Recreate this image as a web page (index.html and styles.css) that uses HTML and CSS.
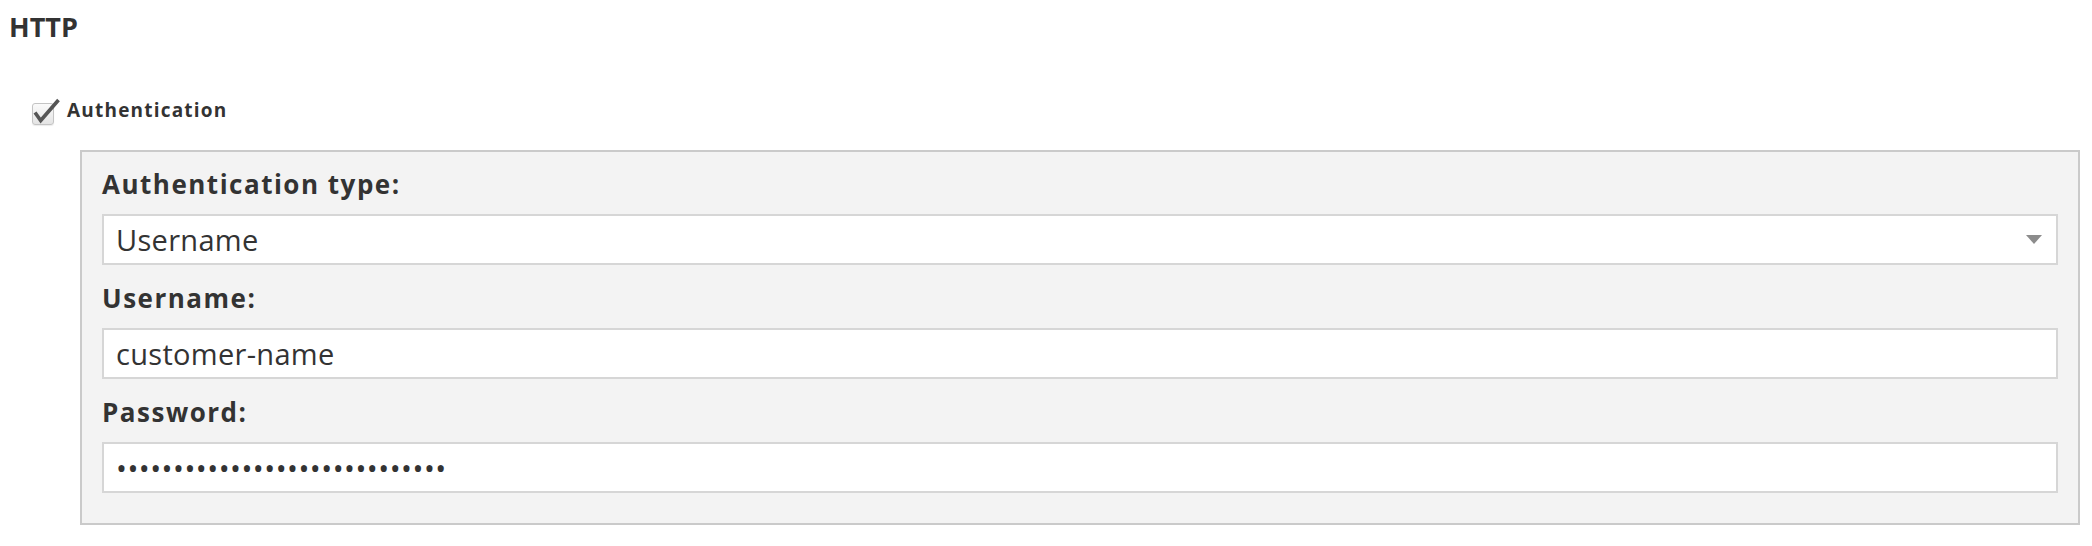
FILE: index.html
```html
<!DOCTYPE html>
<html>
	<head>
		<meta charset="utf-8" />
		<title>HTTP</title>
		<link rel="stylesheet" href="styles.css">
	</head>
	<body>
		<div class="settings">
			<h3 class="section-title">HTTP</h3>
			<label class="check-row">
				<span class="checkbox checked">
					<svg class="tick" width="30" height="28" viewBox="0 0 30 28">
						<path d="M3 14.5 L8.7 22.5 L26.5 2" fill="none" stroke="#555" stroke-width="3.6" stroke-linejoin="miter"/>
					</svg>
				</span>
				<span class="check-text">Authentication</span>
			</label>
			<div class="auth-panel">
				<div class="field-label">Authentication type:</div>
				<div class="field select">
					<span>Username</span>
					<svg class="arrow" width="16" height="9" viewBox="0 0 16 9">
						<path d="M0 0 H16 L8 9 Z" fill="#8c8c8c"/>
					</svg>
				</div>
				<div class="field-label">Username:</div>
				<div class="field">customer-name</div>
				<div class="field-label">Password:</div>
				<div class="field password">&bull;&bull;&bull;&bull;&bull;&bull;&bull;&bull;&bull;&bull;&bull;&bull;&bull;&bull;&bull;&bull;&bull;&bull;&bull;&bull;&bull;&bull;&bull;&bull;&bull;&bull;&bull;&bull;&bull;</div>
			</div>
		</div>
	</body>
</html>
```
FILE: styles.css
```css
*{
	margin: 0;
	padding: 0;
	box-sizing: border-box;
}
body{
	background-color: white;
	color: rgb(51, 51, 51);
	font-family: "Open Sans", "Noto Sans", sans-serif;
}
/*标题*/
.section-title{
	margin: 11px 0 0 9px;
	font-size: 27px;
	line-height: 32px;
	font-weight: 700;
}
/*复选框*/
.check-row{
	display: flex;
	align-items: flex-start;
	margin-top: 56px;
	padding-left: 32px;
	cursor: pointer;
}
.checkbox{
	position: relative;
	display: block;
	width: 22px;
	height: 22px;
	margin-top: 4px;
	border: 1px solid rgb(196, 196, 196);
	border-radius: 3px;
	background: linear-gradient(rgb(250, 250, 250), rgb(228, 228, 228));
	box-shadow: 0 1px 1px rgba(0, 0, 0, .08);
}
.checkbox .tick{
	position: absolute;
	left: -1px;
	top: -6px;
}
.check-text{
	margin-left: 13px;
	font-size: 19px;
	line-height: 22px;
	font-weight: 700;
	letter-spacing: 1.2px;
}
/*面板*/
.auth-panel{
	margin: 25px 12px 0 80px;
	padding: 17px 20px 30px;
	border: 2px solid rgb(202, 202, 202);
	background-color: rgb(243, 243, 243);
}
.field-label{
	margin-top: 18px;
	margin-bottom: 15px;
	font-size: 26px;
	line-height: 30px;
	font-weight: 700;
	letter-spacing: 1.5px;
}
.field-label:first-child{
	margin-top: 0;
}
.field{
	height: 51px;
	padding: 0 14px 0 12px;
	border: 2px solid rgb(214, 214, 214);
	background-color: white;
	font-size: 29px;
	line-height: 47px;
	letter-spacing: 0.3px;
	white-space: nowrap;
}
.field.select{
	display: flex;
	align-items: center;
	justify-content: space-between;
}
.field.select .arrow{
	display: block;
}
.field.password{
	letter-spacing: 0.5px;
}
```
